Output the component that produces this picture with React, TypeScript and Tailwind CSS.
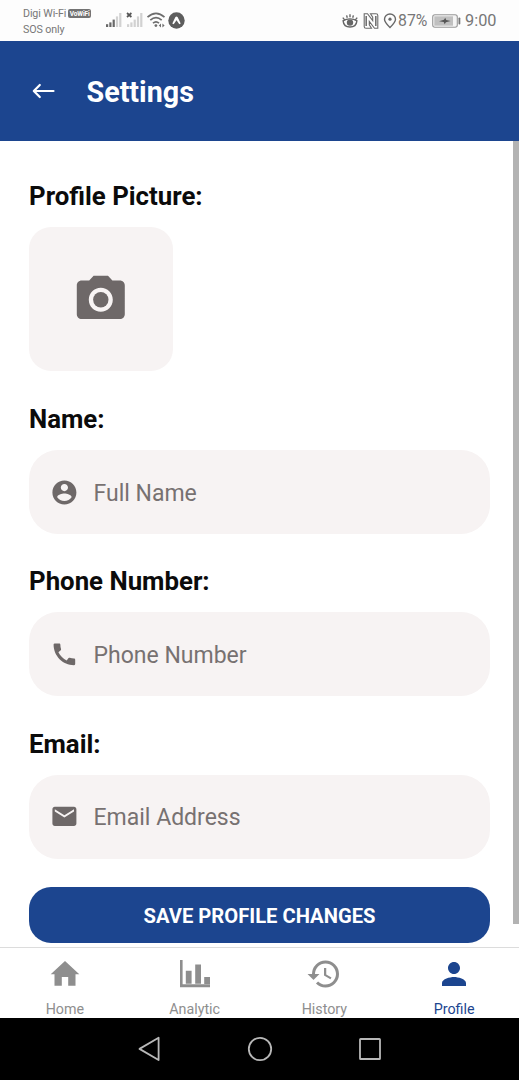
import type { ReactNode } from "react";
import { MdCall, MdCameraAlt, MdEmail, MdHistory, MdPerson } from "react-icons/md";

function Signal({ dim }: { dim?: boolean }) {
  return (
    <svg width="18" height="18" viewBox="0 0 18 18" className="shrink-0">
      {[0, 1, 2, 3, 4].map((i) => (
        <rect
          key={i}
          x={1 + i * 3.3}
          y={[13.2, 11.4, 8.6, 5.4, 2][i]}
          width="2.2"
          height={[2.8, 4.6, 7.4, 10.6, 14][i]}
          fill={!dim && i < 3 ? "#686868" : "#d2d2d2"}
        />
      ))}
      {dim && <path d="M1 2l4.4 4M5.4 2L1 6" stroke="#555" strokeWidth="1.7" />}
    </svg>
  );
}

function AccountCircle() {
  return (
    <svg width="28.8" height="28.8" viewBox="0 0 24 24" fill="currentColor">
      <path d="M12 2C6.48 2 2 6.48 2 12s4.48 10 10 10 10-4.48 10-10S17.52 2 12 2zm0 3c1.66 0 3 1.34 3 3s-1.34 3-3 3-3-1.34-3-3 1.34-3 3-3zm0 14.2c-2.5 0-4.71-1.28-6-3.22.03-1.99 4-3.08 6-3.08 1.99 0 5.97 1.09 6 3.08-1.29 1.94-3.5 3.22-6 3.22z" />
    </svg>
  );
}

function StatusBar() {
  return (
    <div className="flex h-[40.5px] shrink-0 items-start bg-[#fdfdfd] text-[#777]">
      <div className="ml-[23px] w-[82px] pt-[6px] text-[10.7px] leading-[15.5px] tracking-[-0.12px]">
        <div className="flex items-center gap-[2px] whitespace-nowrap">
          <span>Digi Wi-Fi</span>
          <span className="flex h-[9px] w-[23px] items-center justify-center rounded-[2px] bg-[#737373] text-[6.5px] font-bold leading-none text-white">
            VoWiFi
          </span>
        </div>
        <div>SOS only</div>
      </div>
      <div className="flex pt-[11px]">
        <Signal />
        <div className="ml-[3px]">
          <Signal dim />
        </div>
        <svg width="20" height="18" viewBox="0 0 20 18" className="ml-[2px]" fill="none" stroke="#6d6d6d" strokeWidth="1.7">
          <path d="M1.5 6.2Q10-1.3 18.5 6.2M4.3 9.2Q10 4.2 15.7 9.2M7 12.2Q10 9.6 13 12.2" />
          <circle cx="9.9" cy="14.6" r="1.4" fill="#6d6d6d" stroke="none" />
          <path d="M12.8 14.6l2.2-2v4zM18.6 14.6l-2.2-2v4z" fill="#6d6d6d" stroke="none" />
        </svg>
        <svg width="17" height="17" viewBox="0 0 17 17" className="ml-[2px] mt-[1px]">
          <circle cx="8.5" cy="8.5" r="8.2" fill="#5d5d5d" />
          <path d="M4.3 11.6L7.3 5.2Q8.5 3.7 9.7 5.2L12.7 11.6 11.3 12.3 8.5 8.3 5.7 12.3z" fill="#fff" />
        </svg>
      </div>
      <div className="ml-auto mr-[22.5px] flex h-[41px] items-center text-[16.3px]">
        <svg width="18" height="16" viewBox="0 0 18 16" fill="none" stroke="#666" strokeWidth="1.4">
          <path d="M1.5 8.2Q9 3.6 16.5 8.2M2.2 8.4Q2.8 14 9 14T15.8 8.4M1.8 4.6l1.6 2M5.6 2.4l.7 2.4M9 1.2v3M12.4 2.4l-.7 2.4M16.2 4.6l-1.6 2" />
          <circle cx="9" cy="9.6" r="2.5" fill="#666" />
        </svg>
        <svg width="16" height="16" viewBox="0 0 16 16" className="ml-[4px]" fill="none" stroke="#6b6b6b">
          <path d="M1.2.7h3.3L9.7 7.6V4.2L7.5.7H13q1.8 0 1.8 1.8v12.8h-3.3L6.3 8.4v3.4l2.2 3.5H3q-1.8 0-1.8-1.8z" strokeWidth="1.1" />
          <path d="M3.2 3v10M12.8 3v10" strokeWidth="1.5" />
        </svg>
        <svg width="14" height="16" viewBox="0 0 14 16" className="ml-[4px]" fill="none" stroke="#696969" strokeWidth="1.4">
          <path d="M7 14.5Q1.5 9 1.5 6.2A5.5 5.2 0 0 1 12.5 6.2Q12.5 9 7 14.5z" />
          <circle cx="7" cy="6.2" r="1.6" fill="#696969" stroke="none" />
        </svg>
        <span className="ml-px mt-[1px] w-[30px] whitespace-nowrap text-[15.8px]">87%</span>
        <svg width="30" height="14" viewBox="0 0 30 14" className="ml-[4px]">
          <rect x=".7" y=".7" width="24.6" height="12.6" rx="2.2" fill="#f4f4f4" stroke="#999" strokeWidth="1.1" />
          <rect x="2.3" y="2.3" width="18.7" height="9.4" fill="#c0c0c0" />
          <path d="M7 7.2l5-1.4 1.2-2 1 2.3 4.5.8-4.8 1.4-1.2 2-1-2.3z" fill="#555" />
          <rect x="26.5" y="3.5" width="1.8" height="7" rx=".8" fill="#777" />
        </svg>
        <span className="ml-[3px] mt-[2px]">9:00</span>
      </div>
    </div>
  );
}

function Field({ label, placeholder, icon }: { label: string; placeholder: string; icon: ReactNode }) {
  return (
    <label className="block h-[162.2px]">
      <span className="block h-[30px] text-[25.8px] font-bold leading-[30px] text-[#0b0b0b]">{label}</span>
      <span className="mt-[16px] flex h-[84px] items-center rounded-[29px] bg-[#f7f3f3] pl-[21.2px] text-[#6e6868]">
        {icon}
        <span className="ml-[14.5px] mt-[3px] text-[23px] leading-[28px] text-[#777171]">{placeholder}</span>
      </span>
    </label>
  );
}

function Tab({ label, active, children }: { label: string; active?: boolean; children: ReactNode }) {
  return (
    <div className={`flex flex-1 flex-col items-center ${active ? "text-[#1c458f]" : "text-[#8e8e8e]"}`}>
      <div className="mt-[8px] flex h-[36px] items-center">{children}</div>
      <div className="mt-[9px] text-[14.3px] leading-[17px]">{label}</div>
    </div>
  );
}

export default function App() {
  return (
    <div className="flex h-[1080px] w-[519px] flex-col overflow-hidden bg-white font-['Roboto',sans-serif]">
      <StatusBar />
      <header className="flex h-[100.8px] shrink-0 items-center bg-[#1c458f] text-white">
        <svg width="24" height="20" viewBox="0 0 24 20" className="ml-[32px]" fill="none" stroke="currentColor" strokeWidth="2.2" strokeLinecap="round" strokeLinejoin="round">
          <path d="M21.5 10H2M7.8 4L1.8 10l6 6" />
        </svg>
        <h1 className="ml-[30.5px] mt-[3px] text-[28.7px] font-bold leading-[34px]">Settings</h1>
      </header>
      <main className="flex h-[805.7px] shrink-0 justify-between">
        <div className="ml-[29px] w-[461px] pt-[39.9px]">
          <h2 className="h-[30px] text-[25.8px] font-bold leading-[30px] text-[#0b0b0b]">Profile Picture:</h2>
          <div className="mb-[33.1px] mt-[16px] flex h-[144px] w-[144px] items-center justify-center rounded-[22px] bg-[#f7f3f3] pt-[2px] text-[#6e6868]">
            <MdCameraAlt size={57.6} />
          </div>
          <Field label="Name:" placeholder="Full Name" icon={<AccountCircle />} />
          <Field label="Phone Number:" placeholder="Phone Number" icon={<MdCall size={28.8} />} />
          <Field label="Email:" placeholder="Email Address" icon={<MdEmail size={28.8} />} />
          <button className="-mt-[3.7px] flex h-[56px] w-full items-center justify-center rounded-[22px] bg-[#1c458f] pt-[2px] text-[20.2px] font-bold text-white">
            SAVE PROFILE CHANGES
          </button>
        </div>
        <div className="h-[783px] w-[6px] bg-[#b3b3b3]" />
      </main>
      <nav className="flex h-[71.5px] shrink-0 border-t border-[#dcdcdc] bg-white">
        <Tab label="Home">
          <svg width="30" height="28" viewBox="0 0 30 28" fill="currentColor">
            <path d="M15 1L29.3 14.2H25.5V25.7H18.2V17H11.8V25.7H4.5V14.2H.7z" />
          </svg>
        </Tab>
        <Tab label="Analytic">
          <svg width="30" height="28" viewBox="0 0 30 28" fill="currentColor">
            <path d="M0 0h2.6v24.3H30v3H0zM5.8 10.8h5.8v13H5.8zM15.2 4.5H21v19.3h-5.8zM24.2 17H30v7h-5.8z" />
          </svg>
        </Tab>
        <Tab label="History">
          <MdHistory size={36} />
        </Tab>
        <Tab label="Profile" active>
          <MdPerson size={36} />
        </Tab>
      </nav>
      <div className="flex h-[61.5px] shrink-0 items-center justify-center bg-black">
        <svg width="244" height="28" viewBox="0 0 244 28" fill="none" stroke="#b8b8b8" strokeWidth="1.8" strokeLinejoin="round">
          <path d="M20.6 2.7V25L1.5 13.9z" />
          <circle cx="122" cy="14" r="11.2" />
          <rect x="222" y="4" width="20" height="20" rx=".6" />
        </svg>
      </div>
    </div>
  );
}
